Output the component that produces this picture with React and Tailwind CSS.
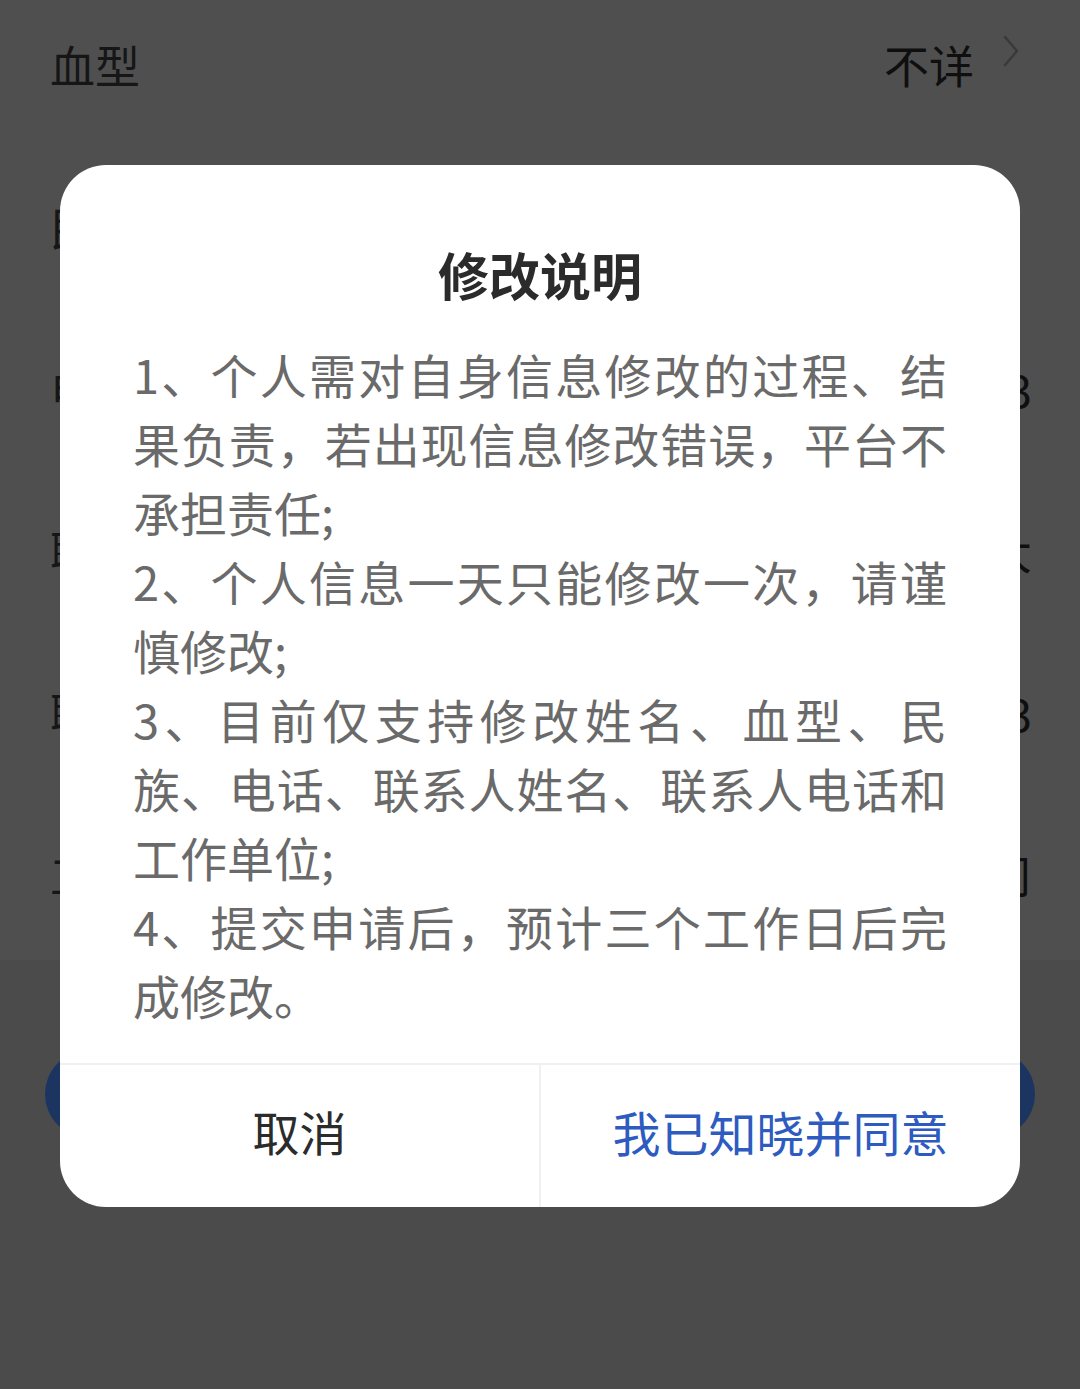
import React from "react";

const rows = [
  { label: "血型", value: "不详", arrow: true },
  { label: "民族", value: "汉族", arrow: true },
  { label: "电话", value: "138****6683" },
  { label: "联系人姓名", value: "张大" },
  { label: "联系人电话", value: "139****2233" },
  { label: "工作单位", value: "某某有限公司" },
];

const rules = [
  "1、个人需对自身信息修改的过程、结果负责，若出现信息修改错误，平台不承担责任;",
  "2、个人信息一天只能修改一次，请谨慎修改;",
  "3、目前仅支持修改姓名、血型、民族、电话、联系人姓名、联系人电话和工作单位;",
  "4、提交申请后，预计三个工作日后完成修改。",
];

function Chevron() {
  return (
    <svg width="18" height="32" viewBox="0 0 18 32" fill="none" className="ml-[28px] -mt-[28px]">
      <path d="M3 2 L15 16 L3 30" stroke="#3a3a3a" strokeWidth="2.5" strokeLinecap="round" strokeLinejoin="round" />
    </svg>
  );
}

export default function App() {
  return (
    <div
      className="relative w-[1080px] h-[1389px] overflow-hidden bg-[#4f4f4f]"
      style={{ fontFamily: '"Noto Sans CJK SC", "Noto Sans", sans-serif' }}
    >
      {/* dimmed page behind the dialog */}
      <div className="h-[976px] -mt-[16px]">
        {rows.map((r) => (
          <div
            key={r.label}
            className={
              r.arrow
                ? "h-[162px] flex items-center justify-between pl-[50px] pr-[60px]"
                : "h-[162px] flex items-center justify-between pl-[50px] pr-[48px]"
            }
          >
            <span className="text-[45px] text-[#161616]">{r.label}</span>
            <div className="flex items-center">
              <span className="text-[45px] text-[#0f0f0f]">{r.value}</span>
              {r.arrow && <Chevron />}
            </div>
          </div>
        ))}
      </div>
      <div className="h-[429px] bg-[#4a4b4a] pt-[90px] px-[45px]">
        <div className="h-[88px] rounded-full bg-[#1b3560]" />
      </div>

      {/* modal */}
      <div className="absolute left-[60px] top-[165px] w-[960px] h-[1042px] bg-white rounded-[46px] flex flex-col overflow-hidden">
        <div className="pt-[79px] text-center text-[51px] leading-[61px] font-bold text-[#2b2b2b]">修改说明</div>
        <div className="flex-1 px-[73px] pt-[34px]">
          {rules.map((t) => (
            <p key={t} className="text-[47px] leading-[69px] text-[#6a6a6a] text-justify">
              {t}
            </p>
          ))}
        </div>
        <div className="h-[144px] flex border-t-2 border-[#f0f0f0]">
          <div className="flex-1 flex items-center justify-center pb-[10px] text-[47px] text-[#2b2b2b] border-r-2 border-[#f0f0f0]">
            取消
          </div>
          <div className="flex-1 flex items-center justify-center pb-[10px] text-[48px] text-[#2d5bbf]">
            我已知晓并同意
          </div>
        </div>
      </div>
    </div>
  );
}
